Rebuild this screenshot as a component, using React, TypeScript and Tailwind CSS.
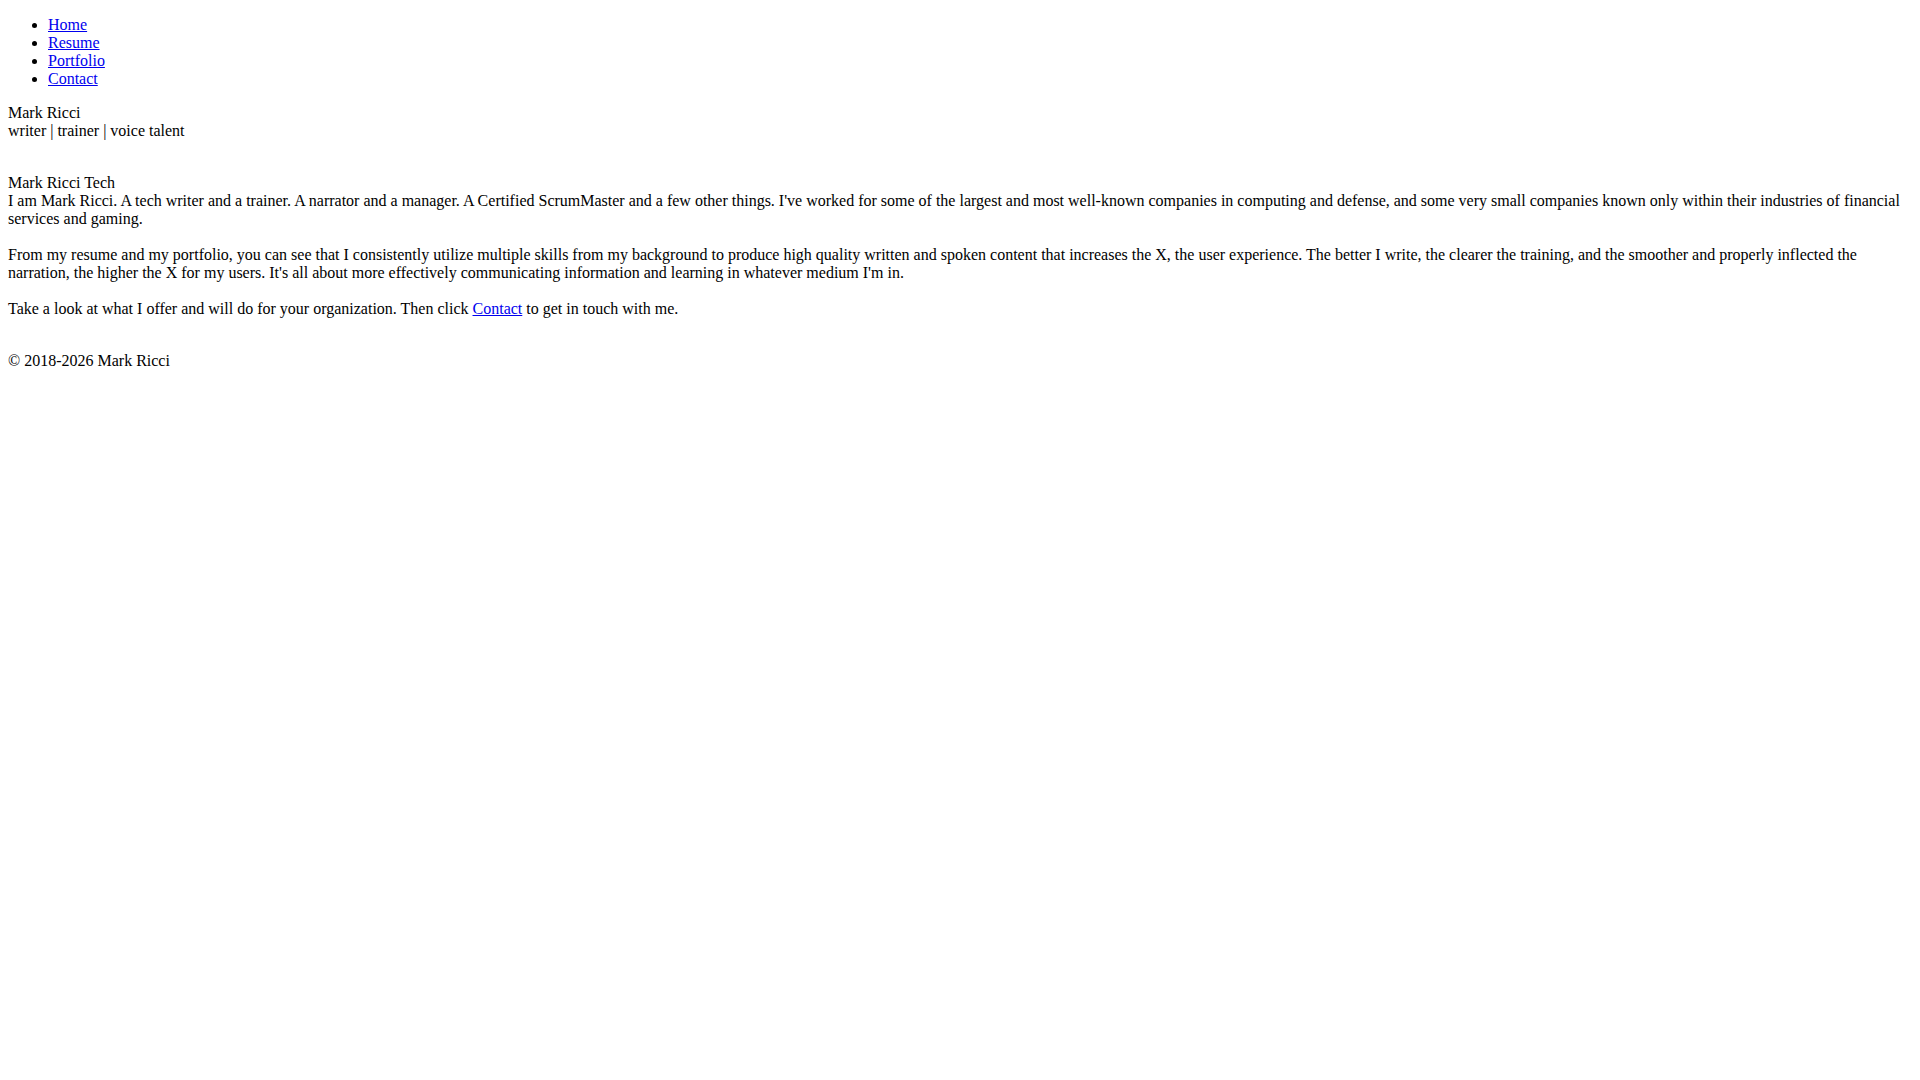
const links = ["Home", "Resume", "Portfolio", "Contact"];

export default function App() {
  return (
    <div className="min-h-screen bg-white p-2 font-['Liberation_Serif',serif] text-base leading-[normal] text-black">
      {/* nav */}
      <ul className="mt-2 mb-4 list-disc pl-10">
        {links.map((l) => (
          <li key={l}>
            <a href="#" className="text-[#0000ee] underline">
              {l}
            </a>
          </li>
        ))}
      </ul>

      {/* header */}
      <div>
        <div>Mark Ricci</div>
        <div>writer | trainer | voice talent</div>
      </div>

      {/* main */}
      <div className="mt-[34px]">
        <div>Mark Ricci Tech</div>
        <p>
          I am Mark Ricci. A tech writer and a trainer. A narrator and a manager. A Certified ScrumMaster and a few other things. I've
          worked for some of the largest and most well-known companies in computing and defense, and some very small companies known only
          within their industries of financial services and gaming.
        </p>
        <p className="mt-[18px]">
          From my resume and my portfolio, you can see that I consistently utilize multiple skills from my background to produce high
          quality written and spoken content that increases the X, the user experience. The better I write, the clearer the training, and
          the smoother and properly inflected the narration, the higher the X for my users. It's all about more effectively communicating
          information and learning in whatever medium I'm in.
        </p>
        <p className="mt-[18px]">
          Take a look at what I offer and will do for your organization. Then click{" "}
          <a href="#" className="text-[#0000ee] underline">
            Contact
          </a>{" "}
          to get in touch with me.
        </p>
      </div>

      {/* footer */}
      <div className="mt-[34px]">© 2018-2026 Mark Ricci</div>
    </div>
  );
}
